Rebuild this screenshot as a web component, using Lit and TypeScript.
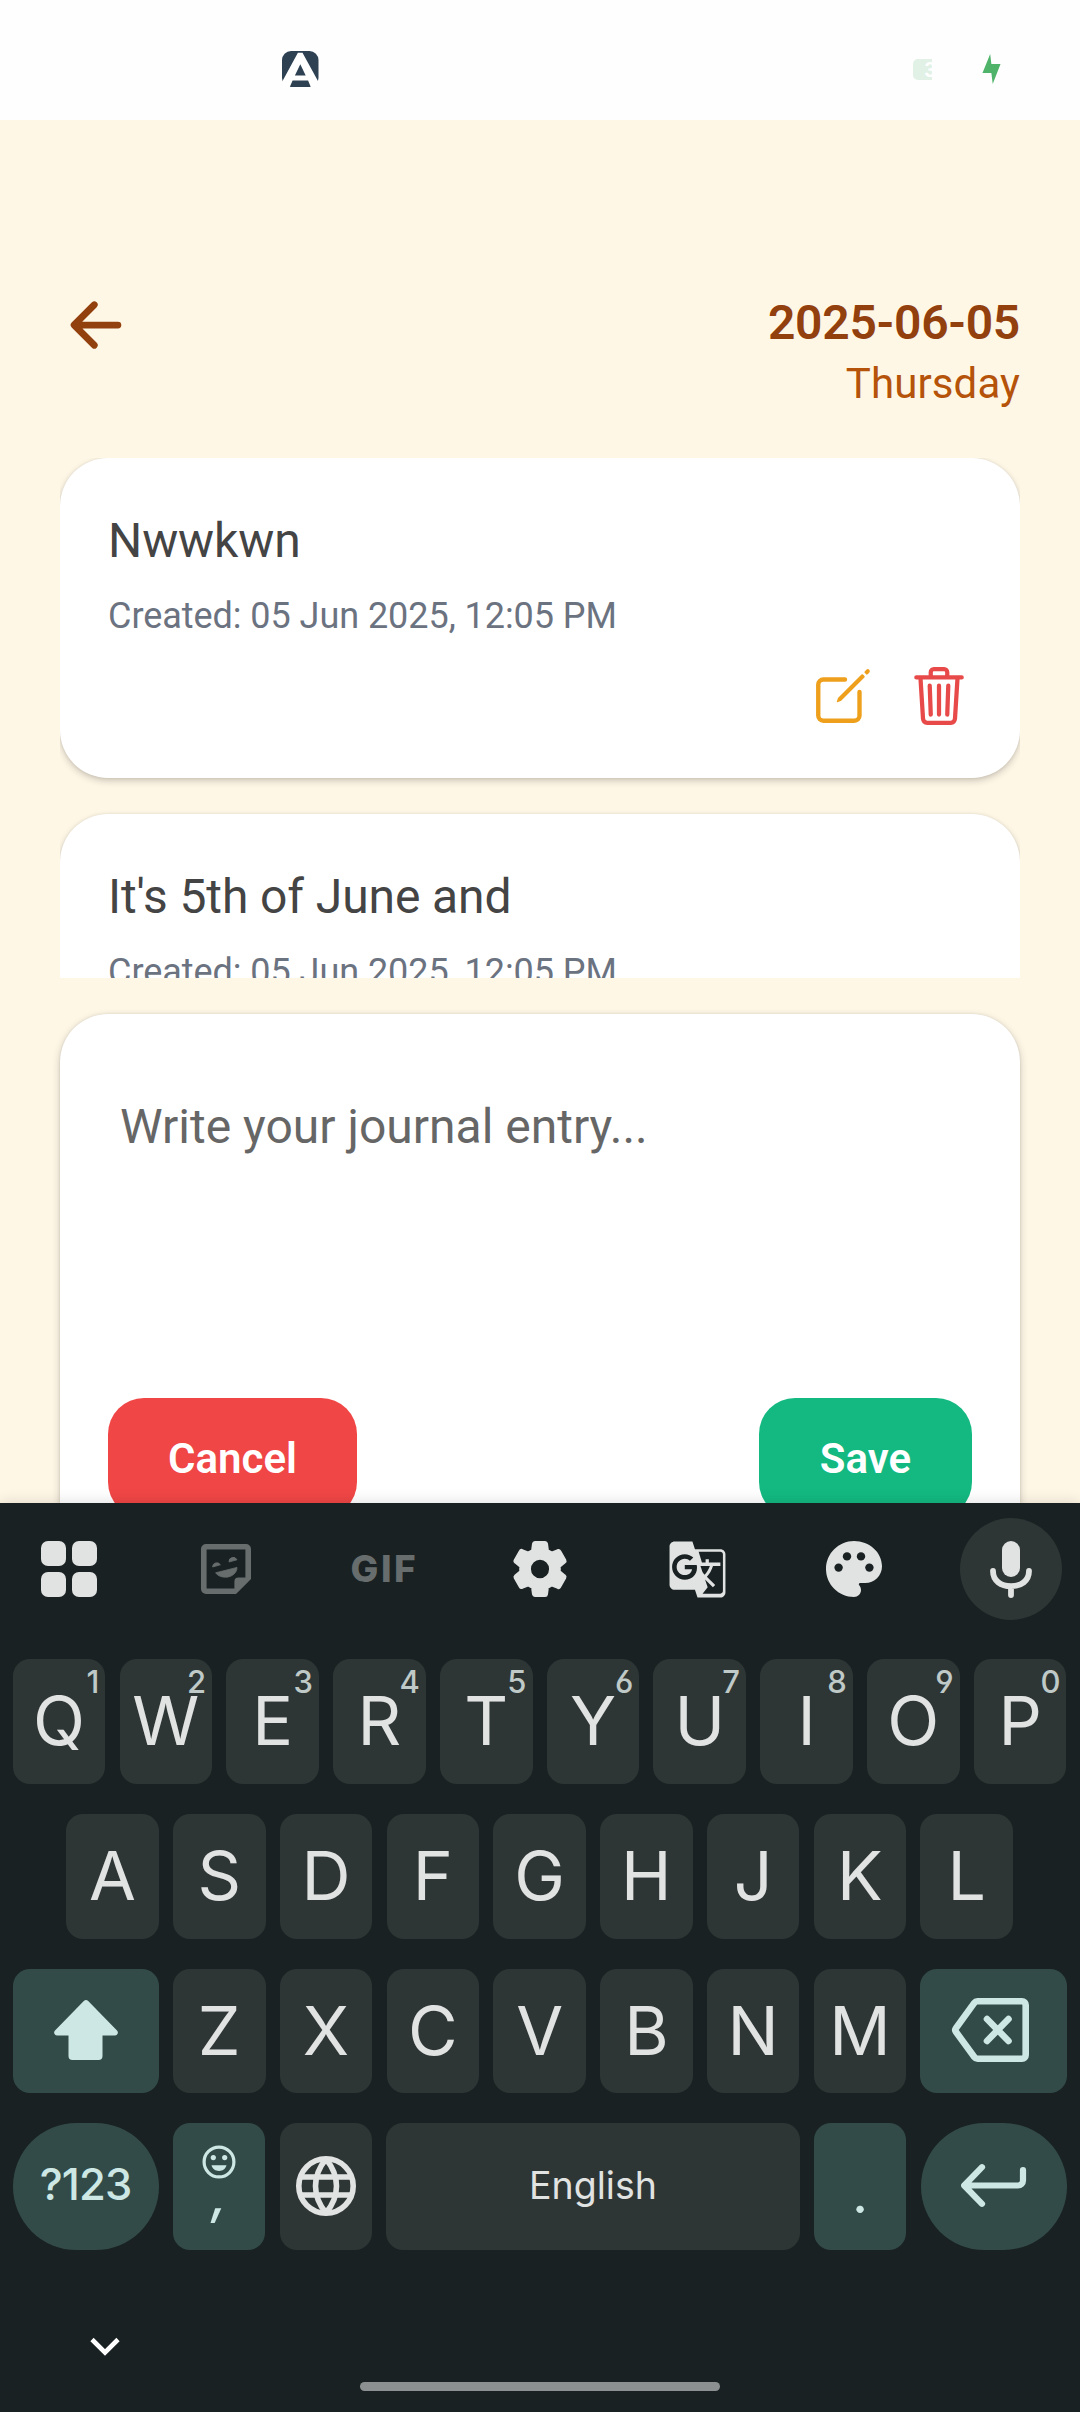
import { LitElement, html, svg, css } from "lit";
import { customElement, property } from "lit/decorators.js";

const ICONS: Record<string, { box: string; body: unknown }> = {
  logo: {
    box: "0 0 37 36",
    body: svg`<rect width="36.5" height="36" rx="9" fill="#2e4153"/>
      <path d="M15.9 1.800h4.600L36.500 31v5h-7.700l-2.700-6.600H10.600L7.800 36H0v-5ZM18.300 13.200 12.900 24.600h10.800Z" fill="#fff" fill-rule="evenodd"/>`,
  },
  bolt: { box: "0 0 20 30", body: svg`<path d="M8.4 0 9.6 10H19L11 30 9.6 19H.5Z" fill="#4fb469"/>` },
  back: {
    box: "0 0 512 512",
    body: svg`<path d="M244 400 100 256l144-144M120 256h292" fill="none" stroke="#92400e" stroke-width="48" stroke-linecap="round" stroke-linejoin="round"/>`,
  },
  edit: {
    box: "0 0 512 512",
    body: svg`<path d="M384 224v184a40 40 0 0 1-40 40H104a40 40 0 0 1-40-40V168a40 40 0 0 1 40-40h167.48" fill="none" stroke="#eea01c" stroke-width="34" stroke-linecap="round" stroke-linejoin="round"/>
      <path d="M459.94 53.25a16.06 16.06 0 0 0-23.22-.56L424.35 65a8 8 0 0 0 0 11.31l11.34 11.32a8 8 0 0 0 11.34 0l12.06-12c6.1-6.09 6.67-16.01.85-22.38zM399.34 90 218.82 270.2a9 9 0 0 0-2.31 3.93L208.16 299a3.91 3.91 0 0 0 4.86 4.86l24.85-8.35a9 9 0 0 0 3.93-2.31L422 112.66a9 9 0 0 0 0-12.66l-9.95-10a9 9 0 0 0-12.71 0z" fill="#eea01c"/>`,
  },
  trash: {
    box: "0 0 512 512",
    body: svg`<path d="m112 112 20 320c.95 18.49 14.4 32 32 32h184c17.67 0 30.87-13.51 32-32l20-320M80 112h352M192 112V72a23.93 23.93 0 0 1 24-24h80a23.93 23.93 0 0 1 24 24v40M256 176v224M184 176l8 224M328 176l-8 224" fill="none" stroke="#e84a4a" stroke-width="33" stroke-linecap="round" stroke-linejoin="round"/>`,
  },
  grid: {
    box: "0 0 56 56",
    body: svg`<g fill="#e1e3e2"><rect width="25" height="25" rx="7"/><rect x="31" width="25" height="25" rx="7"/><rect y="31" width="25" height="25" rx="7"/><rect x="31" y="31" width="25" height="25" rx="7"/></g>`,
  },
  sticker: {
    box: "0 0 50 50",
    body: svg`<path d="M5 0h40a5 5 0 0 1 5 5v30L35 50H5a5 5 0 0 1-5-5V5a5 5 0 0 1 5-5Zm.6 5.6v38.8h27.8v-7a4 4 0 0 1 4-4h7V5.6Z" fill="#676c6c" fill-rule="evenodd"/>
      <path d="M11.6 23a4.2 4.2 0 0 1 7.8-2.2ZM28 18a4.2 4.2 0 0 1 8-2.2ZM14.6 28.8 36 23.4C36 29.5 30 33.2 24.6 33.2c-4.4 0-8-1.4-10-4.4Z" fill="#676c6c" stroke="#676c6c" stroke-width="0.8"/>`,
  },
  gear: {
    box: "0 0 24 24",
    body: svg`<path stroke="#e1e3e2" stroke-width="1.2" stroke-linejoin="round" fill="#e1e3e2" fill-rule="evenodd" d="M19.14,12.94c0.04-0.3,0.06-0.61,0.06-0.94c0-0.32-0.02-0.64-0.07-0.94l2.03-1.58c0.18-0.14,0.23-0.41,0.12-0.61l-1.92-3.32c-0.12-0.22-0.37-0.29-0.59-0.22l-2.39,0.96c-0.5-0.38-1.03-0.7-1.62-0.94L14.4,2.81c-0.04-0.24-0.24-0.41-0.48-0.41h-3.84c-0.24,0-0.43,0.17-0.47,0.41L9.25,5.35C8.66,5.59,8.12,5.92,7.63,6.29L5.24,5.33c-0.22-0.08-0.47,0-0.59,0.22L2.74,8.87C2.62,9.08,2.66,9.34,2.86,9.48l2.03,1.58C4.84,11.36,4.8,11.69,4.8,12s0.02,0.64,0.07,0.94l-2.03,1.58c-0.18,0.14-0.23,0.41-0.12,0.61l1.92,3.32c0.12,0.22,0.37,0.29,0.59,0.22l2.39-0.96c0.5,0.38,1.03,0.7,1.62,0.94l0.36,2.54c0.05,0.24,0.24,0.41,0.48,0.41h3.84c0.24,0,0.44-0.17,0.47-0.41l0.36-2.54c0.59-0.24,1.13-0.56,1.62-0.94l2.39,0.96c0.22,0.08,0.47,0,0.59-0.22l1.92-3.32c0.12-0.22,0.07-0.47-0.12-0.61L19.14,12.94z M12,16a4,4 0 1 1 0,-8a4,4 0 0 1 0,8z"/>`,
  },
  translate: {
    box: "0 0 24 24",
    body: svg`<path fill="#e1e3e2" d="M21,4H11l-1-3H3C1.9,1,1,1.9,1,3v15c0,1.1,0.9,2,2,2h8l1,3h9c1.1,0,2-0.9,2-2V6C23,4.9,22.1,4,21,4z M7,16c-2.76,0-5-2.24-5-5s2.24-5,5-5c1.35,0,2.48,0.5,3.35,1.3L9.03,8.57C8.52,8.08,7.84,7.8,7,7.8C5.22,7.8,3.8,9.24,3.8,11s1.42,3.2,3.2,3.2c1.84,0,2.74-1.3,2.85-2.3H7v-1.7h4.68c0.07,0.31,0.12,0.61,0.12,1.03C11.8,14.12,9.89,16,7,16z M13.17,10.58h3.7c-0.43,1.25-1.11,2.43-2.05,3.47c-0.31-0.35-0.6-0.72-0.86-1.1L13.17,10.58z M22,20.5c0,0.55-0.45,1-1,1h-7l2-2.5l-1.04-3.1l3.1,3.1l0.92-0.92l-3.3-3.25l0.02-0.02c1.13-1.25,1.93-2.69,2.4-4.22H21v-1.3h-4.53V8h-1.29v1.29h-1.44L12.46,5.04H21c0.55,0,1,0.45,1,1V20.5z" fill-rule="evenodd"/>`,
  },
  palette: {
    box: "2 2 20 20",
    body: svg`<path fill="#e1e3e2" d="M12 2C6.49 2 2 6.49 2 12s4.49 10 10 10c1.38 0 2.5-1.12 2.5-2.5 0-.61-.23-1.2-.64-1.67-.08-.1-.13-.21-.13-.33 0-.28.22-.5.5-.5H16c3.31 0 6-2.69 6-6 0-4.96-4.49-9-10-9z"/>
      <g fill="#192122"><circle cx="6.5" cy="11.5" r="1.5"/><circle cx="9.5" cy="7.5" r="1.5"/><circle cx="14.5" cy="7.5" r="1.5"/><circle cx="17.5" cy="11.5" r="1.5"/></g>`,
  },
  mic: {
    box: "0 0 42 57",
    body: svg`<rect x="12" width="18" height="36" rx="9" fill="#e1e3e2"/><path d="M3 30c0 10 8 15.2 18 15.2S39 40 39 30M21 46v8" fill="none" stroke="#e1e3e2" stroke-width="5.8" stroke-linecap="round"/>`,
  },
  shift: {
    box: "0 0 64 60",
    body: svg`<path d="M34.2 1 63 30.6a2.8 2.8 0 0 1-2 4.800H48.500V56a4 4 0 0 1-4 4h-26a4 4 0 0 1-4-4V35.400H3a2.800 2.800 0 0 1-2-4.800L29.800 1a3.100 3.100 0 0 1 4.400 0Z" fill="#cde8e4"/>`,
  },
  backspace: {
    box: "0 0 77 64",
    body: svg`<path d="M25.5 3.3H70a3.7 3.7 0 0 1 3.7 3.7v50a3.7 3.7 0 0 1-3.7 3.7H25.500a4 4 0 0 1-3.200-1.600L3.900 33.800a3 3 0 0 1 0-3.600L22.300 4.900a4 4 0 0 1 3.200-1.600ZM35 21l21.500 22M56.500 21 35 43" fill="none" stroke="#cde8e4" stroke-width="6.6" stroke-linecap="round" stroke-linejoin="round"/>`,
  },
  enter: {
    box: "0 0 66 43",
    body: svg`<path d="M21 3.2 3.2 21.5 21 39.8M3.2 21.5H57a5 5 0 0 0 5-5V6" fill="none" stroke="#cde8e4" stroke-width="6.2" stroke-linecap="round" stroke-linejoin="round"/>`,
  },
  smile: {
    box: "0 0 34 34",
    body: svg`<circle cx="17" cy="17" r="14.9" fill="none" stroke="#cde8e4" stroke-width="3.2"/><g fill="#cde8e4"><circle cx="11.3" cy="12.6" r="2.6"/><circle cx="22.7" cy="12.6" r="2.6"/><path d="M9.5 20.3h15c-1 3.7-4 5.7-7.5 5.7s-6.500-2-7.500-5.700Z"/></g>`,
  },
  globe: {
    box: "0 0 60 60",
    body: svg`<g fill="none" stroke="#e1e3e2" stroke-width="5.6"><circle cx="30" cy="30" r="27.2"/><path d="M4.5 21h51M4.5 39h51"/><path d="M30 3c-14 17-14 37 0 54M30 3c14 17 14 37 0 54"/></g>`,
  },
  chevron: { box: "0 0 30 19", body: svg`<path d="M2 2.5 15 15.5 28 2.5" fill="none" stroke="#fff" stroke-width="4.6"/>` },
};

@customElement("app-icon")
class AppIcon extends LitElement {
  @property() name = "";
  static styles = css`
    :host { display: block; flex: none; }
    svg { display: block; width: 100%; height: 100%; overflow: visible; }
  `;
  render() {
    const icon = ICONS[this.name];
    return html`<svg viewBox=${icon.box} preserveAspectRatio="none">${icon.body}</svg>`;
  }
}

@customElement("journal-entry")
class JournalEntry extends LitElement {
  @property() text = "";
  @property() created = "";
  static styles = css`
    :host { display: block; flex: none; box-sizing: border-box; height: 320px; padding: 48px; border-radius: 48px; background: #fff; box-shadow: 0 3px 7px rgba(0, 0, 0, 0.2), 0 0 3px rgba(0, 0, 0, 0.08); }
    .text { font-size: 48px; line-height: 70px; letter-spacing: -0.1px; color: #444; white-space: nowrap; }
    .created { margin-top: 16px; font-size: 36px; line-height: 48px; letter-spacing: -0.05px; color: #6b7280; white-space: nowrap; }
    .actions { display: flex; justify-content: flex-end; gap: 30px; margin-top: 23px; }
    .action { width: 66px; height: 66px; }
  `;
  render() {
    return html`
      <div class="text">${this.text}</div>
      <div class="created">Created: ${this.created}</div>
      <div class="actions">
        <app-icon class="action" name="edit"></app-icon>
        <app-icon class="action" name="trash"></app-icon>
      </div>
    `;
  }
}

@customElement("soft-keyboard")
class SoftKeyboard extends LitElement {
  static styles = css`
    :host { display: flex; flex-direction: column; height: 909px; background: #192122; font-family: Inter, "Liberation Sans", sans-serif; box-shadow: 0 0 14px rgba(0, 0, 0, 0.14); }
    .tools { display: grid; grid-template-columns: repeat(7, 1fr); align-items: center; justify-items: center; height: 102px; margin: 15px -10px 39px; }
    .grid, .palette { width: 56px; height: 56px; }
    .sticker { width: 50px; height: 50px; }
    .gif { padding-left: 3px; font-size: 37px; font-weight: 800; line-height: 40px; letter-spacing: 2.5px; color: #676c6c; }
    .gear { width: 64px; height: 66px; }
    .translate { width: 61px; height: 61px; }
    .voice { display: flex; align-items: center; justify-content: center; width: 102px; height: 102px; border-radius: 51px; background: #2e3635; }
    .mic { width: 42px; height: 57px; }
    .rows { display: flex; flex-direction: column; gap: 30px; padding: 0 13.4px 0 12.6px; }
    .row { display: flex; justify-content: center; gap: 14.2px; height: 124.8px; }
    .bottom { height: 127px; }
    .key { position: relative; display: flex; flex: none; align-items: center; justify-content: center; box-sizing: border-box; width: 92.6px; padding-bottom: 2px; border-radius: 17px; background: #2e3635; color: #e1e3e2; font-size: 68px; line-height: 80px; }
    .hint { position: absolute; top: 5px; right: 6px; font-size: 31px; line-height: 36px; font-weight: 500; color: #bfc9c7; font-feature-settings: "cv03", "cv04"; }
    .wide { width: 146.1px; }
    .accent { background: #324b48; color: #cde8e4; }
    .pill { border-radius: 64px; font-size: 43.5px; font-weight: 500; letter-spacing: -0.8px; }
    .label { padding-bottom: 5px; }
    .space { flex: 1; font-size: 37.5px; }
    .stack { flex-direction: column; justify-content: flex-start; }
    .smile { width: 34px; height: 34px; margin-top: 22px; }
    .comma { font-size: 52px; line-height: 56px; margin-top: -11px; font-style: italic; font-weight: 500; }
    .dot { font-size: 56px; line-height: 80px; padding-top: 14px; }
    .globe { width: 60px; height: 60px; }
    .shift { width: 64px; height: 60px; }
    .backspace { width: 77px; height: 64px; margin-left: -5px; }
    .enter { width: 66px; height: 43px; }
    .nav { display: flex; flex: 1; flex-direction: column; justify-content: space-between; padding: 87px 90px 21px; }
    .chevron { width: 30px; height: 19px; }
    .home { align-self: center; width: 360px; height: 9px; border-radius: 5px; background: #8c9090; }
  `;
  private letters(keys: string) {
    return [...keys].map((k) => html`<div class="key">${k}</div>`);
  }
  render() {
    return html`
      <div class="tools">
        <app-icon class="grid" name="grid"></app-icon>
        <app-icon class="sticker" name="sticker"></app-icon>
        <div class="gif">GIF</div>
        <app-icon class="gear" name="gear"></app-icon>
        <app-icon class="translate" name="translate"></app-icon>
        <app-icon class="palette" name="palette"></app-icon>
        <div class="voice"><app-icon class="mic" name="mic"></app-icon></div>
      </div>
      <div class="rows">
        <div class="row">
          ${[..."QWERTYUIOP"].map((k, i) => html`<div class="key">${k}<span class="hint">${(i + 1) % 10}</span></div>`)}
        </div>
        <div class="row">${this.letters("ASDFGHJKL")}</div>
        <div class="row">
          <div class="key wide accent"><app-icon class="shift" name="shift"></app-icon></div>
          ${this.letters("ZXCVBNM")}
          <div class="key wide accent"><app-icon class="backspace" name="backspace"></app-icon></div>
        </div>
        <div class="row bottom">
          <div class="key wide accent pill label">?123</div>
          <div class="key accent stack">
            <app-icon class="smile" name="smile"></app-icon>
            <span class="comma">,</span>
          </div>
          <div class="key"><app-icon class="globe" name="globe"></app-icon></div>
          <div class="key space">English</div>
          <div class="key accent"><span class="dot">.</span></div>
          <div class="key wide accent pill"><app-icon class="enter" name="enter"></app-icon></div>
        </div>
      </div>
      <div class="nav">
        <app-icon class="chevron" name="chevron"></app-icon>
        <div class="home"></div>
      </div>
    `;
  }
}

@customElement("app-root")
class AppRoot extends LitElement {
  static styles = css`
    :host { display: flex; flex-direction: column; width: 1080px; height: 2412px; overflow: hidden; background: #fff7e6; font-family: Roboto, "Liberation Sans", sans-serif; }
    .status { display: flex; flex: none; box-sizing: border-box; height: 120px; padding: 51px 79px 0 281.5px; background: #fefefe; }
    .logo { width: 37px; height: 36px; }
    .battery { box-sizing: border-box; width: 19px; height: 21px; margin: 8px 50px 0 auto; border-radius: 5px 0 0 5px; background: #e1f1e5; overflow: hidden; color: #fff; font-size: 20px; line-height: 22px; font-weight: 700; text-indent: 12px; }
    .bolt { width: 19.5px; height: 30px; margin-top: 3px; }
    .header { display: flex; flex: none; justify-content: space-between; height: 169px; padding: 169px 60px 0; }
    .back { width: 72px; height: 72px; }
    .day { display: flex; flex-direction: column; align-items: flex-end; padding-top: 3px; }
    .date { font-size: 48px; line-height: 62px; letter-spacing: -0.25px; font-weight: 600; color: #92400e; }
    .weekday { font-size: 42px; line-height: 60px; letter-spacing: 0.1px; color: #b45309; }
    .list { display: flex; flex: none; flex-direction: column; gap: 36px; height: 520px; margin: 0 60px; overflow: hidden; }
    .editor { display: flex; flex-direction: column; flex: none; box-sizing: border-box; height: 489px; margin: 36px 60px 0; padding: 0 48px; border-radius: 48px 48px 0 0; background: #fff; box-shadow: 0 3px 9px rgba(0, 0, 0, 0.2), 0 0 3px rgba(0, 0, 0, 0.1); }
    .placeholder { height: 299px; padding: 85px 12px 0; font-size: 48px; line-height: 56px; color: #666; }
    .buttons { display: flex; justify-content: space-between; height: 105px; }
    .button { flex: none; box-sizing: border-box; min-width: 213px; height: 120px; padding: 36px 60px; border-radius: 36px; color: #fff; font-size: 42px; line-height: 49px; font-weight: 600; text-align: center; }
    .cancel { background: #f04646; }
    .save { background: #13b981; }
    .keyboard { position: relative; flex: none; }
  `;
  render() {
    return html`
      <div class="status">
        <app-icon class="logo" name="logo"></app-icon>
        <div class="battery">3</div>
        <app-icon class="bolt" name="bolt"></app-icon>
      </div>
      <div class="header">
        <app-icon class="back" name="back"></app-icon>
        <div class="day">
          <div class="date">2025-06-05</div>
          <div class="weekday">Thursday</div>
        </div>
      </div>
      <div class="list">
        <journal-entry text="Nwwkwn" created="05 Jun 2025, 12:05 PM"></journal-entry>
        <journal-entry text="It's 5th of June and" created="05 Jun 2025, 12:05 PM"></journal-entry>
      </div>
      <div class="editor">
        <div class="placeholder">Write your journal entry...</div>
        <div class="buttons">
          <div class="button cancel">Cancel</div>
          <div class="button save">Save</div>
        </div>
      </div>
      <soft-keyboard class="keyboard"></soft-keyboard>
    `;
  }
}
